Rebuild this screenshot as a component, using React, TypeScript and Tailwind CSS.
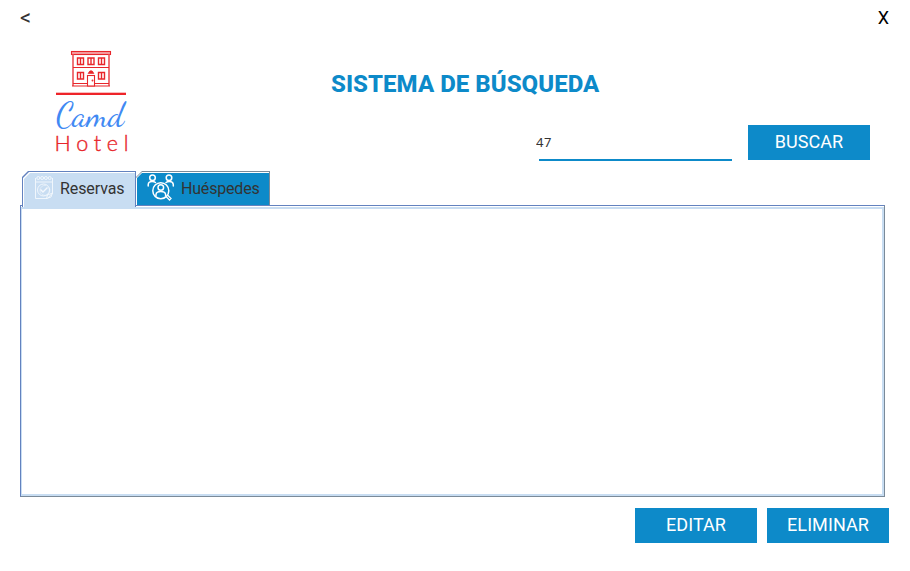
import React from "react";

function HotelLogo() {
  return (
    <svg width="84" height="108" viewBox="50 48 84 108" className="block">
      <g fill="none" stroke="#e8262b" strokeWidth="1.1">
        <rect x="71.5" y="51.5" width="39" height="3" fill="#f4a0a2" />
        <path d="M73 54.5V86M109 54.5V86" strokeWidth="1.8" stroke="#ee666a" />
        <path d="M73 67.5H109M73 83.5H87M95 83.5H109M72 86H110" />
        <path d="M77.5 58h6v6.500h-6zM80.500 58v6.500M88 58h6v6.500h-6zM91 58v6.500M98.500 58h6v6.500h-6zM101.500 58v6.500M77.500 72.500h6v6.500h-6zM80.500 72.500v6.500M98.500 72.500h6v6.500h-6zM101.500 72.500v6.500" strokeWidth="1.400" />
        <rect x="87.500" y="75.500" width="7" height="10.500" fill="#ffffff" />
        <path d="M88.500 73.200Q91 68.500 93.500 73.200Z" fill="#e8262b" />
        <circle cx="92.500" cy="80.500" r=".4" fill="#e8262b" />
      </g>
      <rect x="56" y="92.700" width="70" height="2.300" fill="#ee2429" />
      <text x="56" y="125.500" fontSize="34" textLength="68" lengthAdjust="spacingAndGlyphs" fill="#4189f3" className="font-['Dancing_Script','Liberation_Serif',serif]">Camd</text>
      <text x="54.500" y="151" fontSize="21.500" textLength="74" fill="#e8262b" stroke="#e8262b" strokeWidth=".4" className="font-['Lato',sans-serif] font-light">Hotel</text>
    </svg>
  );
}

function CalendarIcon() {
  return (
    <svg width="20" height="26" viewBox="0 0 20 26" fill="none" stroke="#f4f8fd" strokeWidth=".9" className="shrink-0">
      <path d="M1.500 3V23.500H13M18.500 3V18L13.500 23.500M1.500 7H18.500" />
      <g>
        <circle cx="4.300" cy="3" r="1.500" /><circle cx="8.100" cy="3" r="1.500" />
        <circle cx="11.900" cy="3" r="1.500" /><circle cx="15.700" cy="3" r="1.500" />
      </g>
      <circle cx="9.500" cy="15" r="6" />
      <path d="M15 12.500A5 5 0 1 1 12 10.500" strokeWidth=".5" />
      <path d="M6.500 14.500L9 17L13.500 12.500" strokeWidth="1.400" />
      <path d="M12.500 23.500L13.500 20L18.500 18L17 22Z" />
    </svg>
  );
}

function GuestsIcon() {
  return (
    <svg width="28" height="28" viewBox="0 0 28 28" fill="none" stroke="#ffffff" strokeWidth="1.500" strokeLinecap="round" className="shrink-0">
      <circle cx="5.500" cy="3.700" r="2.800" />
      <circle cx="22" cy="3.700" r="2.800" />
      <path d="M1.200 12V10.500Q1.500 7.500 5 7.500Q7.300 7.500 8.500 8.500M26.300 12V10.500Q26 7.500 22.500 7.500Q20.200 7.500 19 8.500" />
      <circle cx="13.800" cy="16.700" r="8" />
      <circle cx="13.800" cy="13.500" r="2.800" />
      <path d="M9 21.500V20.500Q9.300 17.500 13.800 17.500Q18.300 17.500 18.600 20.500V21.500" />
      <path d="M19.500 23L22.500 26L24 24.500L21 21.500" strokeWidth="1.300" />
    </svg>
  );
}

function ActionButton({ label }: { label: string }) {
  return (
    <button className="flex h-[35px] w-[122px] items-center justify-center bg-[#0d8ac9] pb-px text-[18px] leading-none tracking-[0.08px] text-white">
      {label}
    </button>
  );
}

export default function App() {
  return (
    <main className="h-[571px] w-[910px] overflow-hidden bg-white font-['Roboto',sans-serif] text-[#333333]">
      <nav className="flex h-9 items-center justify-between pl-5 pr-[21px]">
        <button className="text-[22px] font-normal leading-none">&lt;</button>
        <button className="text-[18px] leading-none text-black">X</button>
      </nav>
      <header className="flex h-[135px] pl-[50px] pr-10 pt-3">
        <HotelLogo />
        <div className="flex flex-1 flex-col">
          <h1 className="pl-[197px] pt-[22px] text-[24px] font-extrabold leading-7 tracking-[0.04px] text-[#0d8ac9]">SISTEMA DE BÚSQUEDA</h1>
          <div className="mt-[27px] flex items-start justify-end gap-4">
            <div className="h-9 w-[196px]">
              <input aria-label="Buscar" defaultValue="47" className="block h-[34px] w-full font-['Noto_Sans',sans-serif] text-[13px] tracking-[0.5px] outline-none" />
              <div className="ml-[3px] h-0.5 bg-[#0d8ac9]" />
            </div>
            <ActionButton label="BUSCAR" />
          </div>
        </div>
      </header>
      <section className="ml-5 w-[865px]">
        <div className="relative z-10 flex h-[34px] items-start pl-0.5 text-[16px] leading-none">
          <button className="h-[36px] w-[114px] bg-[#6382bf] p-px pb-0 [clip-path:polygon(6px_0,100%_0,100%_100%,0_100%,0_6px)]">
            <span className="flex h-full bg-white pl-px pt-px [clip-path:polygon(6px_0,100%_0,100%_100%,0_100%,0_6px)]">
              <span className="flex h-full flex-1 items-start gap-1.5 bg-[#c8ddf2] pl-2.5 pt-0.5 [clip-path:polygon(6px_0,100%_0,100%_100%,0_100%,0_6px)]">
                <CalendarIcon />
                <span className="pt-[6px] tracking-[-0.1px]">Reservas</span>
              </span>
            </span>
          </button>
          <button className="h-[34px] w-[134px] bg-[#7a8a99] pr-px pt-px [clip-path:polygon(6px_0,100%_0,100%_100%,0_100%,0_6px)]">
            <span className="flex h-full bg-white pl-px pt-px [clip-path:polygon(6px_0,100%_0,100%_100%,0_100%,0_6px)]">
              <span className="flex h-full flex-1 items-start gap-[6px] bg-[#0d8ac9] pl-2.5 pt-px [clip-path:polygon(5px_0,100%_0,100%_100%,0_100%,0_5px)]">
                <GuestsIcon />
                <span className="pt-[7px] tracking-[-0.18px]">Huéspedes</span>
              </span>
            </span>
          </button>
        </div>
        <div className="h-[292px] border border-b-[#7a8a99] border-l-[#6382bf] border-r-[#7a8a99] border-t-[#6382bf] pt-px">
          <div className="h-full border-b-2 border-l border-r-2 border-t-2 border-[#c8ddf2] bg-white" />
        </div>
      </section>
      <footer className="flex justify-end gap-2.5 pr-[21px] pt-[11px]">
        <ActionButton label="EDITAR" />
        <ActionButton label="ELIMINAR" />
      </footer>
    </main>
  );
}
